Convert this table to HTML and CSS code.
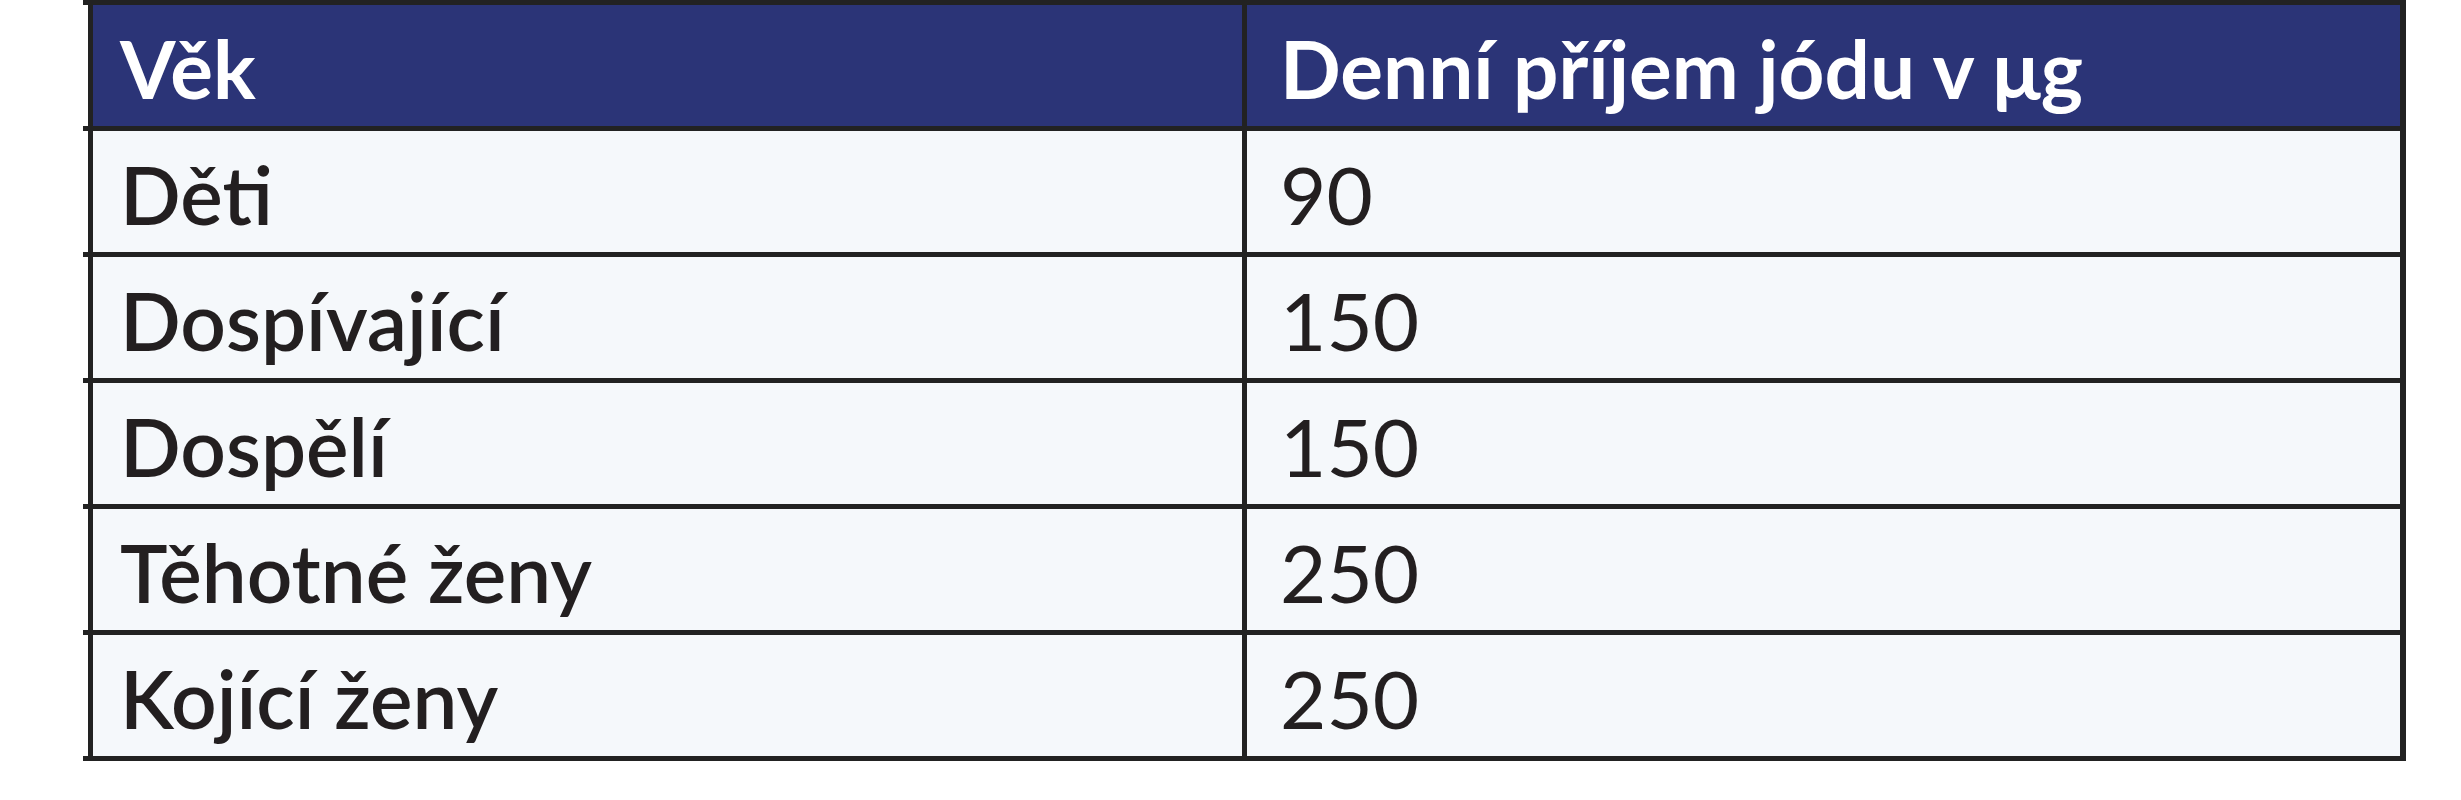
FILE: index.html
```html
<!DOCTYPE html>
<html lang="cs">
<head>
<meta charset="utf-8">
<title>Denní příjem jódu</title>
<link rel="stylesheet" href="styles.css">
</head>
<body>
<div class="table">
  <div class="row head">
    <div class="cell c1">Věk</div>
    <div class="cell c2">Denní příjem jódu v μg</div>
  </div>
  <div class="row">
    <div class="cell c1">Děti</div>
    <div class="cell c2">90</div>
  </div>
  <div class="row">
    <div class="cell c1">Dospívající</div>
    <div class="cell c2">150</div>
  </div>
  <div class="row">
    <div class="cell c1">Dospělí</div>
    <div class="cell c2">150</div>
  </div>
  <div class="row">
    <div class="cell c1">Těhotné ženy</div>
    <div class="cell c2">250</div>
  </div>
  <div class="row">
    <div class="cell c1">Kojící ženy</div>
    <div class="cell c2">250</div>
  </div>
</div>
</body>
</html>
```
FILE: styles.css
```css
html, body {
  margin: 0;
  padding: 0;
  background: #ffffff;
}

body {
  font-family: "Lato", "Open Sans", sans-serif;
}

.table {
  margin-left: 83px;
  width: 2323px;
  border-top: 5px solid #222222;
}

.row {
  display: flex;
  padding-left: 5px;
  border-bottom: 5px solid #222222;
  height: 121px;
}

.cell {
  display: flex;
  align-items: center;
  box-sizing: border-box;
  border-left: 5px solid #222222;
  background: #f5f8fb;
  color: #231f20;
  font-size: 80px;
  line-height: 1;
  padding-top: 4px;
}

.c1 {
  width: 1154px;
  padding-left: 27px;
  font-weight: 600;
}

.c2 {
  width: 1164px;
  padding-left: 33px;
  border-right: 6px solid #222222;
  font-weight: 400;
}

.head .cell {
  background: #2b3477;
  color: #ffffff;
  font-weight: 700;
}
```
